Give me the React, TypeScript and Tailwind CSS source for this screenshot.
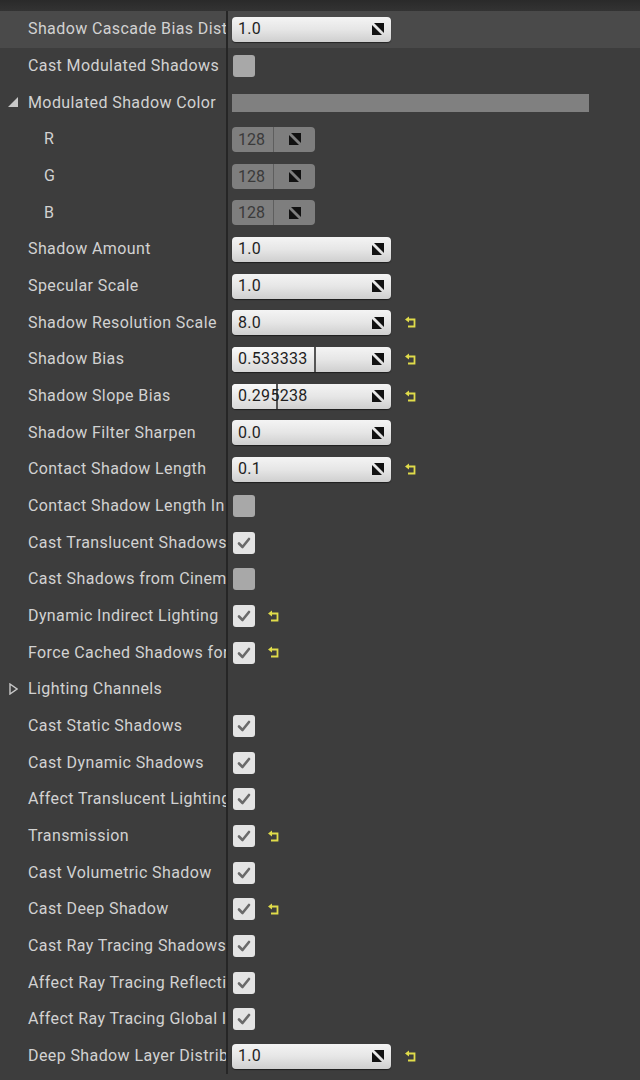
import React from 'react';

type Row =
    | { kind: 'num'; label: string; value: string; fill?: number; reset?: boolean; hl?: boolean }
    | { kind: 'check'; label: string; checked: boolean; reset?: boolean }
    | { kind: 'color'; label: string }
    | { kind: 'rgb'; label: string; value: string }
    | { kind: 'group'; label: string };

const rows: Row[] = [
    { kind: 'num', label: 'Shadow Cascade Bias Distribution', value: '1.0', hl: true },
    { kind: 'check', label: 'Cast Modulated Shadows', checked: false },
    { kind: 'color', label: 'Modulated Shadow Color' },
    { kind: 'rgb', label: 'R', value: '128' },
    { kind: 'rgb', label: 'G', value: '128' },
    { kind: 'rgb', label: 'B', value: '128' },
    { kind: 'num', label: 'Shadow Amount', value: '1.0' },
    { kind: 'num', label: 'Specular Scale', value: '1.0' },
    { kind: 'num', label: 'Shadow Resolution Scale', value: '8.0', reset: true },
    { kind: 'num', label: 'Shadow Bias', value: '0.533333', fill: 53, reset: true },
    { kind: 'num', label: 'Shadow Slope Bias', value: '0.295238', fill: 29, reset: true },
    { kind: 'num', label: 'Shadow Filter Sharpen', value: '0.0' },
    { kind: 'num', label: 'Contact Shadow Length', value: '0.1', reset: true },
    { kind: 'check', label: 'Contact Shadow Length In World Space', checked: false },
    { kind: 'check', label: 'Cast Translucent Shadows', checked: true },
    { kind: 'check', label: 'Cast Shadows from Cinematic Objects Only', checked: false },
    { kind: 'check', label: 'Dynamic Indirect Lighting', checked: true, reset: true },
    { kind: 'check', label: 'Force Cached Shadows for Movable Primitives', checked: true, reset: true },
    { kind: 'group', label: 'Lighting Channels' },
    { kind: 'check', label: 'Cast Static Shadows', checked: true },
    { kind: 'check', label: 'Cast Dynamic Shadows', checked: true },
    { kind: 'check', label: 'Affect Translucent Lighting', checked: true },
    { kind: 'check', label: 'Transmission', checked: true, reset: true },
    { kind: 'check', label: 'Cast Volumetric Shadow', checked: true },
    { kind: 'check', label: 'Cast Deep Shadow', checked: true, reset: true },
    { kind: 'check', label: 'Cast Ray Tracing Shadows', checked: true },
    { kind: 'check', label: 'Affect Ray Tracing Reflections', checked: true },
    { kind: 'check', label: 'Affect Ray Tracing Global Illumination', checked: true },
    { kind: 'num', label: 'Deep Shadow Layer Distribution', value: '1.0', reset: true },
];

function SpinIcon() {
    return (
        <svg width="14" height="14" viewBox="0 0 14 14" className="shrink-0">
            <polygon points="3,1 13,1 13,11" fill="#111" />
            <polygon points="1,3 1,13 11,13" fill="#111" />
        </svg>
    );
}

function ResetIcon() {
    return (
        <svg width="12" height="13" viewBox="0 0 12 13">
            <polygon points="0,3.5 4,0.5 4,6.5" fill="#e0dc4a" />
            <path d="M3.5 3.5 H9.5 V10.5 H3" stroke="#e0dc4a" strokeWidth="1.8" fill="none" />
        </svg>
    );
}

function NumberBox({ value, fill }: { value: string; fill?: number }) {
    return (
        <div className="relative flex h-[25px] w-[159px] items-center rounded-[4px] bg-gradient-to-b from-[#f4f4f4] via-[#e6e6e6] to-[#cfcfcf] pr-[6px] shadow-[0_1px_1px_rgba(0,0,0,0.5)]">
            {fill !== undefined && (
                <div
                    className="absolute top-0 bottom-0 left-0 rounded-l-[4px] border-r-2 border-[#555] bg-gradient-to-b from-[#fafafa] to-[#d8d8d8]"
                    style={{ width: `${fill}%` }}
                />
            )}
            <span className="relative flex-1 pl-[6px] text-[16px] tracking-[0.3px] text-[#1e1e1e]">{value}</span>
            <SpinIcon />
        </div>
    );
}

function Checkbox({ checked }: { checked: boolean }) {
    return (
        <div
            className={`flex h-[22px] w-[22px] items-center justify-center rounded-[3px] ${
                checked ? 'bg-[#e4e4e4]' : 'bg-[#a8a8a8]'
            }`}
        >
            {checked && (
                <svg width="16" height="16" viewBox="0 0 16 16">
                    <path d="M3 8.5 L6.5 12 L13 4" stroke="#6a6a6a" strokeWidth="2.6" fill="none" strokeLinecap="round" strokeLinejoin="round" />
                </svg>
            )}
        </div>
    );
}

function Value({ row }: { row: Row }) {
    if (row.kind === 'num')
        return (
            <div className="flex items-center gap-[14px]">
                <NumberBox value={row.value} fill={row.fill} />
                {row.reset && <ResetIcon />}
            </div>
        );
    if (row.kind === 'check')
        return (
            <div className="flex items-center gap-[13px] pl-[1px]">
                <Checkbox checked={row.checked} />
                {row.reset && <ResetIcon />}
            </div>
        );
    if (row.kind === 'color') return <div className="h-[18px] w-[357px] bg-[#808080]" />;
    if (row.kind === 'rgb')
        return (
            <div className="flex h-[25px] w-[83px] items-center rounded-[4px] bg-[#7e7e7e]">
                <span className="w-[42px] border-r border-[#5e5e5e] pl-[6px] text-[16px] leading-[25px] text-[#3a3a3a]">{row.value}</span>
                <div className="flex flex-1 justify-center">
                    <SpinIcon />
                </div>
            </div>
        );
    return null;
}

export default function App() {
    return (
        <div className="h-[1080px] w-[640px] overflow-hidden bg-[#3d3d3d] font-['Roboto','Liberation_Sans',sans-serif]">
            <div className="h-[11px] bg-gradient-to-b from-[#2a2a2a] to-[#333]" />
            <div className="relative">
                <div className="absolute top-0 bottom-0 left-[226px] w-[2px] bg-[#262626]" />
                {rows.map((row, idx) => (
                    <div
                        key={idx}
                        className={`flex h-[36.68px] items-center ${
                            row.kind === 'num' && row.hl ? 'bg-[#4a4a4a]' : ''
                        }`}
                    >
                        <div className="relative h-full w-[226px] shrink-0 overflow-hidden">
                            {row.kind === 'color' && (
                                <svg width="10" height="10" viewBox="0 0 10 10" className="absolute top-[13px] left-[8px]">
                                    <polygon points="10,0 10,10 0,10" fill="#c8c8c8" />
                                </svg>
                            )}
                            {row.kind === 'group' && (
                                <svg width="9" height="12" viewBox="0 0 9 12" className="absolute top-[12px] left-[9px]">
                                    <polygon points="1,1 8,6 1,11" fill="none" stroke="#c8c8c8" strokeWidth="1.4" />
                                </svg>
                            )}
                            <div
                                className={`flex h-full items-center whitespace-nowrap text-[16px] tracking-[0.4px] text-[#d2d2d2] ${
                                    row.kind === 'rgb' ? 'pl-[44px]' : 'pl-[28px]'
                                }`}
                            >
                                {row.label}
                            </div>
                        </div>
                        <div className="pl-[6px]">
                            <Value row={row} />
                        </div>
                    </div>
                ))}
            </div>
        </div>
    );
}
